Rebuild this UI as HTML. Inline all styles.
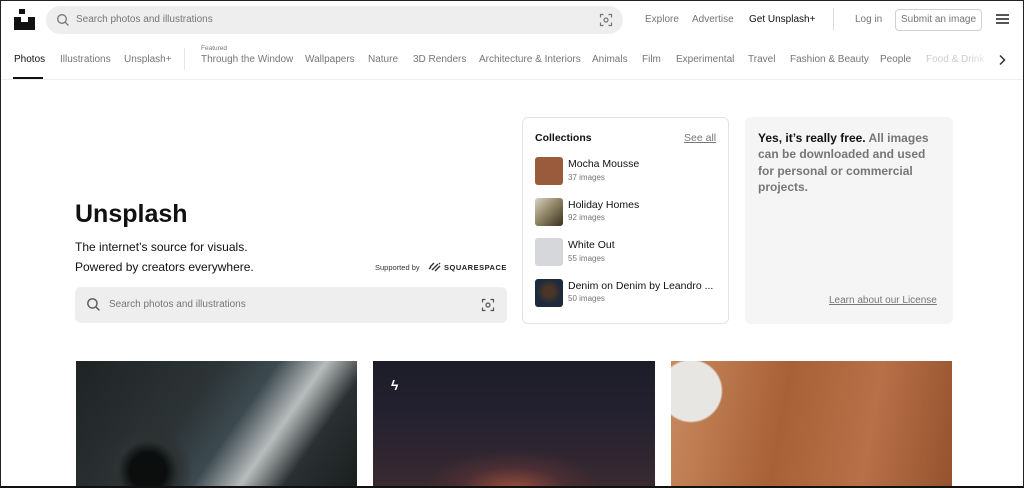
<!DOCTYPE html>
<html><head><meta charset="utf-8"><style>
*{margin:0;padding:0;box-sizing:border-box}
body{width:1024px;height:488px;overflow:hidden;background:#fff;font-family:"Liberation Sans",sans-serif;color:#111;position:relative}
.frame{position:absolute;inset:0;border:1px solid #222;border-bottom:2px solid #111;pointer-events:none;z-index:10}
.abs{position:absolute}
.g{color:#767676}
.nav a{position:absolute;top:54px;font-size:10px;color:#767676;white-space:nowrap}
</style></head><body>
<div class="frame"></div>
<div class="abs" style="left:19px;top:9px;width:6px;height:5px;background:#111"></div>
<div class="abs" style="left:14px;top:17px;width:21px;height:13px;background:#111"></div>
<div class="abs" style="left:21px;top:17px;width:7px;height:5px;background:#fff"></div>
<div class="abs" style="left:46px;top:6px;width:577px;height:28px;border-radius:14px;background:#eee"></div>
<svg class="abs" style="left:56px;top:13px" width="14" height="14" viewBox="0 0 14 14"><circle cx="6" cy="6" r="4.3" fill="none" stroke="#767676" stroke-width="1.3"/><path d="M9.2 9.2L12.5 12.5" stroke="#767676" stroke-width="1.3"/></svg>
<div class="abs g" style="left:76px;top:14px;font-size:10px">Search photos and illustrations</div>
<svg class="abs" style="left:599px;top:13px" width="14" height="14" viewBox="0 0 14 14" fill="none" stroke="#767676" stroke-width="1.2"><path d="M1.5 4.5V1.5H4.5M9.5 1.5H12.5V4.5M12.5 9.5V12.5H9.5M4.5 12.5H1.5V9.5"/><circle cx="7" cy="7" r="2"/></svg>
<div class="abs g" style="left:645px;top:14px;font-size:10px">Explore</div>
<div class="abs g" style="left:692px;top:14px;font-size:10px">Advertise</div>
<div class="abs" style="left:749px;top:14px;font-size:10px;color:#111">Get Unsplash+</div>
<div class="abs" style="left:833px;top:8px;width:1px;height:22px;background:#ddd"></div>
<div class="abs g" style="left:855px;top:14px;font-size:10px">Log in</div>
<div class="abs g" style="left:895px;top:9px;width:87px;height:22px;border:1px solid #d1d1d1;border-radius:4px;font-size:10px;text-align:center;line-height:20px">Submit an image</div>
<div class="abs" style="left:996px;top:14px;width:13px;height:1.5px;background:#555;box-shadow:0 4px 0 #555,0 8px 0 #555"></div>
<div class="nav">
<a style="left:14px;color:#111">Photos</a>
<a style="left:60px">Illustrations</a>
<a style="left:124px">Unsplash+</a>
<a style="left:201px;top:45px;font-size:6.5px">Featured</a>
<a style="left:201px">Through the Window</a>
<a style="left:305px">Wallpapers</a>
<a style="left:368px">Nature</a>
<a style="left:413px">3D Renders</a>
<a style="left:479px">Architecture &amp; Interiors</a>
<a style="left:592px">Animals</a>
<a style="left:642px">Film</a>
<a style="left:676px">Experimental</a>
<a style="left:748px">Travel</a>
<a style="left:790px">Fashion &amp; Beauty</a>
<a style="left:880px">People</a>
<a style="left:926px;color:#ccc">Food &amp; Drink</a>
</div>
<div class="abs" style="left:184px;top:48px;width:1px;height:22px;background:#e5e5e5"></div>
<div class="abs" style="left:970px;top:40px;width:54px;height:38px;background:linear-gradient(90deg,rgba(255,255,255,0),#fff 40%)"></div>
<svg class="abs" style="left:998px;top:54px" width="8" height="12" viewBox="0 0 8 12"><path d="M2 1.5L6.5 6 2 10.5" fill="none" stroke="#333" stroke-width="1.5"/></svg>
<div class="abs" style="left:13px;top:77px;width:30px;height:2px;background:#111"></div>
<div class="abs" style="left:0;top:79px;width:1024px;height:1px;background:#eee"></div>
<div class="abs" style="left:75px;top:200px;font-size:25px;font-weight:bold">Unsplash</div>
<div class="abs" style="left:75px;top:237px;font-size:12px;line-height:20px">The internet’s source for visuals.<br>Powered by creators everywhere.</div>
<div class="abs" style="left:375px;top:263px;font-size:7.5px;color:#333">Supported by</div>
<svg class="abs" style="left:428px;top:261px" width="14" height="12" viewBox="0 0 14 12" fill="none" stroke="#333" stroke-width="1.4"><path d="M2 6l4-4M4 9l6-6M7 10l5-5M1 8l2-2M11 3l1-1"/></svg>
<div class="abs" style="left:444px;top:263px;font-size:7.5px;font-weight:bold;letter-spacing:.5px;color:#222">SQUARESPACE</div>
<div class="abs" style="left:75px;top:287px;width:432px;height:36px;border-radius:6px;background:#eee"></div>
<svg class="abs" style="left:86px;top:297px" width="15" height="15" viewBox="0 0 14 14"><circle cx="6" cy="6" r="4.3" fill="none" stroke="#555" stroke-width="1.3"/><path d="M9.2 9.2L12.5 12.5" stroke="#555" stroke-width="1.3"/></svg>
<div class="abs g" style="left:109px;top:299px;font-size:10px">Search photos and illustrations</div>
<svg class="abs" style="left:481px;top:298px" width="14" height="14" viewBox="0 0 14 14" fill="none" stroke="#555" stroke-width="1.2"><path d="M1.5 4.5V1.5H4.5M9.5 1.5H12.5V4.5M12.5 9.5V12.5H9.5M4.5 12.5H1.5V9.5"/><circle cx="7" cy="7" r="2"/></svg>
<div class="abs" style="left:522px;top:117px;width:207px;height:207px;border:1px solid #e3e3e3;border-radius:6px"></div>
<div class="abs" style="left:535px;top:132px;font-size:10.5px;font-weight:bold">Collections</div>
<div class="abs g" style="left:684px;top:132px;font-size:10.5px;text-decoration:underline">See all</div>
<div class="abs" style="left:535px;top:157px;width:28px;height:28px;border-radius:3px;background:#9a5a3c"></div>
<div class="abs" style="left:568px;top:158px;font-size:10.5px">Mocha Mousse</div>
<div class="abs g" style="left:568px;top:173px;font-size:8px">37 images</div>
<div class="abs" style="left:535px;top:198px;width:28px;height:28px;border-radius:3px;background:linear-gradient(135deg,#d8d2c4,#8a8060 50%,#3a3022)"></div>
<div class="abs" style="left:568px;top:199px;font-size:10.5px">Holiday Homes</div>
<div class="abs g" style="left:568px;top:213px;font-size:8px">92 images</div>
<div class="abs" style="left:535px;top:238px;width:28px;height:28px;border-radius:3px;background:#d6d7da"></div>
<div class="abs" style="left:568px;top:239px;font-size:10.5px">White Out</div>
<div class="abs g" style="left:568px;top:254px;font-size:8px">55 images</div>
<div class="abs" style="left:535px;top:279px;width:28px;height:28px;border-radius:3px;background:radial-gradient(circle at 50% 45%,#4a3528 25%,#1c2a3c 60%)"></div>
<div class="abs" style="left:568px;top:280px;font-size:10.5px">Denim on Denim by Leandro ...</div>
<div class="abs g" style="left:568px;top:294px;font-size:8px">50 images</div>
<div class="abs" style="left:745px;top:117px;width:208px;height:207px;border-radius:6px;background:#f5f5f5"></div>
<div class="abs" style="left:758px;top:130px;width:180px;font-size:12px;font-weight:bold;line-height:16.3px;color:#767676"><span style="color:#111">Yes, it’s really free.</span> All images can be downloaded and used for personal or commercial projects.</div>
<div class="abs g" style="left:829px;top:295px;font-size:10px;text-decoration:underline">Learn about our License</div>
<div class="abs" style="left:76px;top:361px;width:281px;height:126px;background:radial-gradient(circle at 72px 110px,#0c0e0e 18px,#2c3232 30px,transparent 45px),linear-gradient(125deg,#1e2424 0%,#2d3436 40%,#3c4a50 55%,#b8bcbc 68%,#2a3032 80%,#1a1e1e 100%)"></div>
<div class="abs" style="left:373px;top:361px;width:282px;height:126px;background:radial-gradient(ellipse 90px 40px at 140px 130px,#a0503a,#4a2e34 60%,transparent 100%),linear-gradient(#1c1c28,#262231 50%,#3a2a30)"></div>
<div class="abs" style="left:391px;top:377px;color:#fff;font-size:14px;font-weight:bold">ϟ</div>
<div class="abs" style="left:671px;top:361px;width:281px;height:126px;background:radial-gradient(circle at 20px 30px,#e8e6e2 30px,transparent 32px),linear-gradient(100deg,#c98a5e,#a86036 40%,#b87048 70%,#94532e)"></div>
</body></html>
